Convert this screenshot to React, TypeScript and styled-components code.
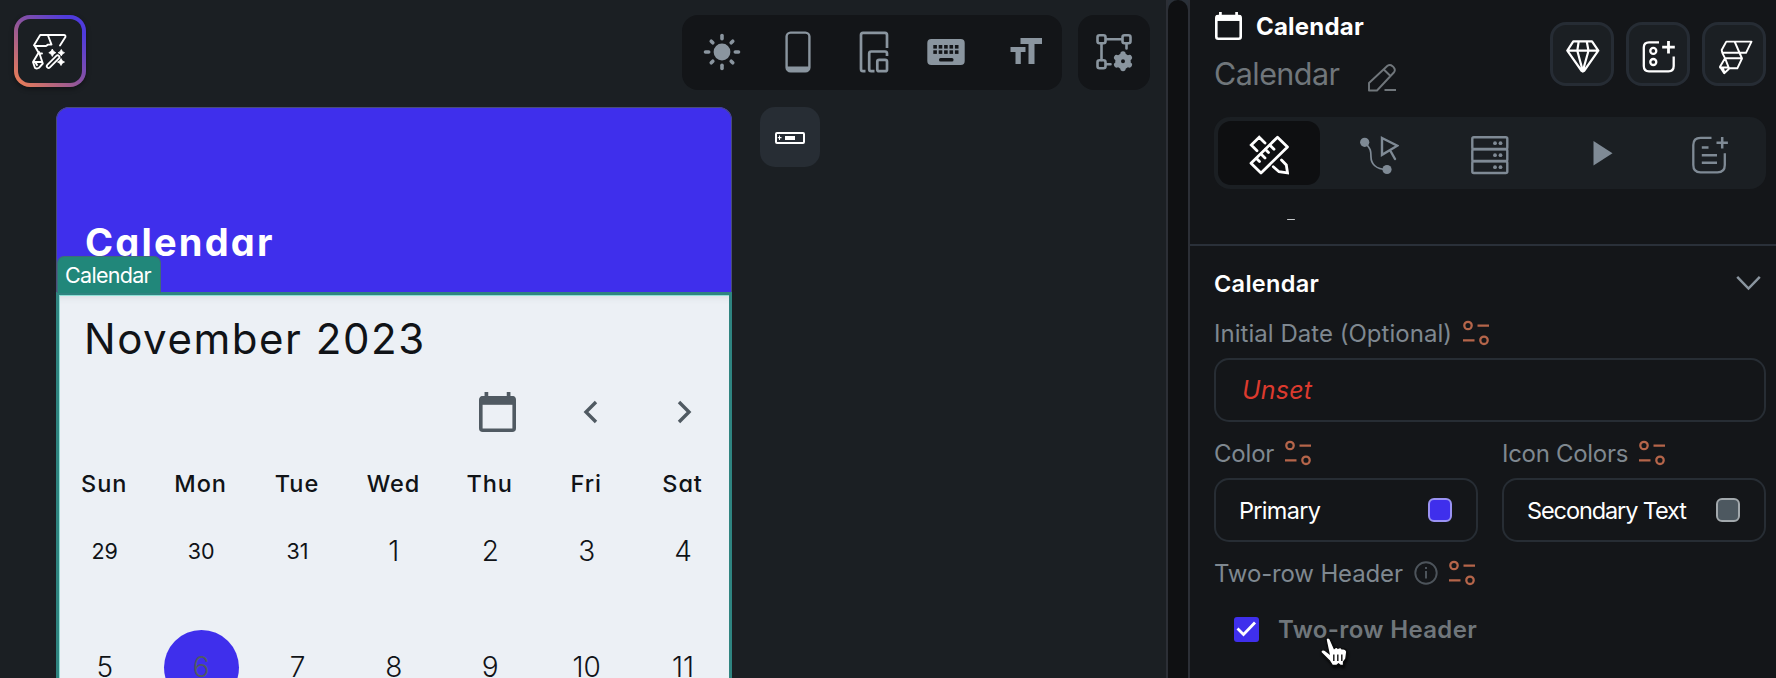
import React from "react";
import styled, { createGlobalStyle } from "styled-components";

const c = {
  canvas: "#1b1f23",
  panel: "#141619",
  bar: "#131518",
  raised: "#1b1f23",
  line: "#272d34",
  muted: "#8a959f",
  label: "#7f8890",
  dim: "#70767b",
  primary: "#3f2fec",
  teal: "#21877a",
  orange: "#b5654a",
  ink: "#101317",
  slate: "#505a62",
};

const GlobalStyle = createGlobalStyle`
  * { box-sizing: border-box; }
  body {
    margin: 0;
    background: ${c.canvas};
    font-family: Inter, "Liberation Sans", sans-serif;
    overflow: hidden;
  }
  svg { display: block; flex: none; }
`;

const Shell = styled.div`
  display: flex;
  width: 1776px;
  height: 678px;
  overflow: hidden;
`;

const Canvas = styled.main`
  width: 1166px;
  flex: none;
  background: ${c.canvas};
`;

const TopBar = styled.header`
  display: flex;
  align-items: flex-start;
  height: 107px;
  padding: 15px 16px 0 14px;
`;

const AiButton = styled.button`
  display: grid;
  place-items: center;
  width: 72px;
  height: 72px;
  padding: 0;
  border: 4px solid transparent;
  border-radius: 16px;
  background:
    linear-gradient(${c.canvas}, ${c.canvas}) padding-box,
    linear-gradient(to top right, #e27a5c 8%, #8a52a0 50%, #4f3bdc 85%) border-box;
  box-shadow: 0 2px 5px rgba(0, 0, 0, 0.4);
  margin-right: auto;
`;

const ToolGroup = styled.div<{ $width: number }>`
  display: flex;
  align-items: center;
  width: ${(p) => p.$width}px;
  height: 75px;
  padding-left: 2px;
  border-radius: 16px;
  background: ${c.bar};
  color: ${c.muted};
  & + & {
    margin-left: 16px;
    padding: 0;
  }
`;

const Tool = styled.div<{ $wide?: boolean }>`
  display: grid;
  place-items: center;
  flex: none;
  width: ${(p) => (p.$wide ? 76 : 72)}px;
  padding-bottom: 1px;
`;

const Stage = styled.div`
  display: flex;
  align-items: flex-start;
  padding-left: 56px;
  gap: 28px;
`;

const Phone = styled.section`
  width: 676px;
  height: 571px;
  border-radius: 13px 13px 0 0;
  overflow: hidden;
  background: linear-gradient(${c.primary} 0 185px, #ecf0f5 185px);
`;

const PhoneBar = styled.div`
  display: flex;
  align-items: flex-end;
  height: 185px;
  padding: 0 0 27px 28px;
  border: 1px solid #4a4c78;
  border-bottom: 0;
  border-radius: 13px 13px 0 0;
  background: ${c.primary};
  color: #fff;
  font-size: 38px;
  line-height: 46px;
  font-weight: 700;
  letter-spacing: 2.2px;
  font-feature-settings: "cv11";
`;

const CalendarBlock = styled.div`
  position: relative;
  height: 440px;
  color: ${c.ink};
  font-feature-settings: "cv11";
  box-shadow: inset 0 10px 8px -6px rgba(60, 70, 80, 0.14);
`;

const Outline = styled.div`
  position: absolute;
  inset: 0;
  border: 3px solid #2f8480;
  box-shadow: inset 1px 1px 0 #8fe0d6;
  pointer-events: none;
`;

const Tag = styled.div`
  position: absolute;
  left: 1px;
  top: -36px;
  width: 104px;
  height: 37px;
  padding-left: 7px;
  border: 1px solid #3f6b78;
  border-bottom: 0;
  border-radius: 7px 7px 0 0;
  background: ${c.teal};
  color: #fff;
  font-size: 21.5px;
  line-height: 37px;
  letter-spacing: -0.7px;
  font-feature-settings: normal;
`;

const Month = styled.div`
  height: 94px;
  padding-left: 28px;
  font-size: 42px;
  line-height: 94px;
  font-weight: 400;
  letter-spacing: 1.55px;
`;

const MonthNav = styled.div`
  display: flex;
  justify-content: flex-end;
  align-items: center;
  height: 52px;
  padding: 0 27px 1px 0;
  gap: 54.7px;
  color: ${c.slate};
`;

const Week = styled.div<{ $head?: boolean }>`
  display: grid;
  grid-template-columns: repeat(7, 96.4px);
  place-items: center;
  height: ${(p) => (p.$head ? 56 : 116)}px;
  padding: ${(p) => (p.$head ? "35px 0 0" : "0 0 2px 0.5px")};
`;

const DayName = styled.span`
  font-size: 23.5px;
  line-height: 21px;
  font-weight: 500;
  letter-spacing: 0.9px;
`;

const Day = styled.span<{ $outside?: boolean; $today?: boolean }>`
  display: grid;
  place-items: center;
  width: 75px;
  height: 75px;
  border-radius: 50%;
  font-size: ${(p) => (p.$outside ? 21.5 : 28)}px;
  font-weight: ${(p) => (p.$outside ? 400 : 350)};
  background: ${(p) => (p.$today ? c.primary : "transparent")};
  color: ${(p) => (p.$today ? c.slate : "inherit")};
`;

const AppBarToggle = styled.button`
  display: grid;
  place-items: center;
  width: 60px;
  height: 60px;
  padding: 2px 0 0;
  border: 0;
  border-radius: 15px;
  background: #272d34;
`;

const Gutter = styled.div`
  width: 24px;
  flex: none;
  border: solid #2c2f36;
  border-width: 0 2px;
  background: #2a3038;
`;

const GutterTrack = styled.div`
  height: 100%;
  border-radius: 10px 10px 0 0;
  background: #0f1012;
`;

const Panel = styled.aside`
  flex: 1;
  background: ${c.panel};
`;

const PanelHead = styled.div`
  display: flex;
  justify-content: space-between;
  height: 117px;
  padding: 0 10px 0 24px;
`;

const TitleRow = styled.div`
  display: flex;
  align-items: center;
  height: 52px;
  gap: 14px;
  padding-left: 1px;
  color: #fff;
  font-size: 24px;
  font-weight: 700;
  letter-spacing: 0.2px;
`;

const NameRow = styled.div`
  display: flex;
  align-items: center;
  height: 42px;
  gap: 28px;
  color: ${c.dim};
  font-size: 30.5px;
  letter-spacing: -0.55px;
`;

const PencilSlot = styled.span`
  padding-top: 9px;
`;

const Actions = styled.div`
  display: flex;
  gap: 12px;
  padding-top: 22px;
`;

const ActionButton = styled.button`
  display: grid;
  place-items: center;
  width: 64px;
  height: 64px;
  padding: 0;
  border: 3px solid #262c34;
  border-radius: 16px;
  background: ${c.raised};
  color: #fff;
`;

const Tabs = styled.nav`
  display: grid;
  grid-template-columns: 102px 118px 104px 120px 1fr;
  height: 72px;
  margin: 0 10px 0 24px;
  padding: 4px;
  border-radius: 16px;
  background: ${c.raised};
`;

const Tab = styled.div<{ $active?: boolean }>`
  display: grid;
  place-items: center;
  padding-top: 4px;
  border-radius: 13px;
  background: ${(p) => (p.$active ? "#0e0f11" : "transparent")};
  color: ${(p) => (p.$active ? "#fff" : "#7f8a95")};
`;

const Scrolled = styled.div`
  height: 57px;
  padding: 29.5px 0 0 97px;
  border-bottom: 2px solid #2a3039;
`;

const ScrolledDash = styled.div`
  width: 8px;
  height: 1.5px;
  border-radius: 1px;
  background: #c5c8ca;
`;

const Section = styled.section`
  padding: 0 10px 0 24px;
`;

const SectionTitle = styled.div`
  display: flex;
  align-items: center;
  justify-content: space-between;
  height: 74px;
  padding-right: 5px;
  color: #fff;
  font-size: 23.5px;
  font-weight: 600;
  letter-spacing: 0.3px;
`;

const Label = styled.div<{ $track?: number }>`
  display: flex;
  align-items: center;
  gap: 11px;
  height: 26px;
  margin-bottom: 12px;
  color: ${c.label};
  font-size: 24px;
  letter-spacing: ${(p) => p.$track ?? 0}px;
  white-space: nowrap;
`;

const Field = styled.div<{ $track?: number }>`
  display: flex;
  align-items: center;
  justify-content: space-between;
  height: 64px;
  margin-bottom: 18px;
  padding: 0 24px 0 23px;
  border: 2px solid ${c.line};
  border-radius: 15px;
  color: #fff;
  font-size: 23.5px;
  letter-spacing: ${(p) => p.$track ?? 0}px;
  white-space: nowrap;
`;

const Unset = styled.em`
  padding-left: 3px;
  font-size: 25px;
  color: #dc3a2e;
`;

const Pair = styled.div`
  display: grid;
  grid-template-columns: 1fr 1fr;
  gap: 24px;
`;

const Swatch = styled.span<{ $fill: string; $edge: string }>`
  width: 24px;
  height: 24px;
  border-radius: 6px;
  border: 2px solid ${(p) => p.$edge};
  background: ${(p) => p.$fill};
`;

const CheckRow = styled.div`
  position: relative;
  display: flex;
  align-items: center;
  height: 50px;
  margin-top: 18px;
  padding-left: 20px;
  gap: 19px;
  color: ${c.dim};
  font-size: 24px;
  font-weight: 600;
  letter-spacing: 0.35px;
`;

const CheckBox = styled.span`
  display: grid;
  place-items: center;
  width: 25px;
  height: 25px;
  border-radius: 3px;
  background: ${c.primary};
`;

const Pointer = styled.div`
  position: absolute;
  left: 104px;
  top: 30px;
  filter: drop-shadow(1px 2px 1px rgba(0, 0, 0, 0.7));
`;

const line = (w: number) => ({
  fill: "none",
  stroke: "currentColor",
  strokeWidth: w,
  strokeLinecap: "round" as const,
  strokeLinejoin: "round" as const,
});

const AiIcon = () => (
  <svg width="38" height="38" viewBox="0 0 38 38" color="#fff">
    <g {...line(1.9)}>
      <path d="M29 13.5 34.4 5Q34.8 3 33 3H9.2L3 13.2 4 14H15L17 12.6H20.5L17 3.5" />
      <path d="M4 14.2 8 21.5H11M8 20 2 30 4 36Q6 37 8 35.8L11.8 31.5 8 20M3 30H11M4.5 30.5 6 33" />
    </g>
    <path d="M17.6 34.2 26.6 25.2" {...line(5.4)} />
    <path d="M17.6 34.2 26.6 25.2" {...line(1.8)} stroke={c.canvas} />
    <path
      d="M21.3 17q.8 2.9 3.5 3.7-2.7.8-3.5 3.7-.8-2.9-3.5-3.7 2.7-.8 3.5-3.7zM30.3 17.5q.7 2.5 3.2 3.2-2.5.7-3.2 3.2-.7-2.5-3.2-3.2 2.5-.7 3.2-3.2zM30 26.5q.8 2.7 3.5 3.5-2.7.8-3.5 3.5-.8-2.7-3.5-3.5 2.7-.8 3.5-3.5z"
      fill="currentColor"
      stroke="currentColor"
      strokeWidth="0.8"
    />
  </svg>
);

const SunIcon = () => (
  <svg width="38" height="38" viewBox="-19 -19 38 38">
    <circle r="8.4" fill="currentColor" />
    {[0, 45, 90, 135, 180, 225, 270, 315].map((a) => (
      <path key={a} d={a % 90 ? "M0 -13V-15.2" : "M0 -13.3V-16.5"} transform={`rotate(${a})`} {...line(3.6)} />
    ))}
  </svg>
);

const PhoneIcon = () => (
  <svg width="26" height="42" viewBox="0 0 26 42">
    <rect x="1.6" y="1.6" width="22.8" height="38.8" rx="4" {...line(2.4)} />
    <path d="M2 35.5H24V38Q23 40.5 20 40.5H6Q3 40.5 2 38Z" fill="currentColor" />
  </svg>
);

const DevicesIcon = () => (
  <svg width="30" height="42" viewBox="0 0 30 42">
    <g {...line(2.7)} strokeLinecap="butt">
      <path d="M6.5 40.2H4Q2 40.2 2 38V4Q2 1.8 4 1.8H26Q28 1.8 28 4V17" />
      <path d="M15.5 40.2H12.2Q10.2 40.2 10.2 38V22.5Q10.2 20.5 12.2 20.5H26Q28 20.5 28 22.5V25" />
      <rect x="18.3" y="28.8" width="9.7" height="11.4" rx="1.8" />
    </g>
  </svg>
);

const KeyboardIcon = () => (
  <svg width="46" height="28" viewBox="0 0 46 28">
    <rect x="0.3" y="1" width="37.4" height="26" rx="4" fill="currentColor" />
    <g fill={c.bar}>
      {[0, 1, 2, 3, 4].map((i) => (
        <React.Fragment key={i}>
          <rect x={6.3 + i * 5.4} y="7" width="3.6" height="3.6" />
          <rect x={6.3 + i * 5.4} y="12.3" width="3.6" height="3.6" />
        </React.Fragment>
      ))}
      <rect x="12" y="20" width="14.5" height="3.4" rx="1.5" />
    </g>
  </svg>
);

const TextSizeIcon = () => (
  <svg width="32" height="30" viewBox="0 0 32 30">
    <path d="M10.5 1H32V7H24.5V27H18.5V7H10.5ZM0.5 10H15.5V15H10.8V27H5.5V15H0.5Z" fill="currentColor" />
  </svg>
);

const NodesIcon = () => (
  <svg width="40" height="40" viewBox="0 0 40 40">
    <g {...line(2.6)}>
      <rect x="3.5" y="3.2" width="8" height="8" rx="2" />
      <rect x="28.5" y="3.2" width="8" height="8" rx="2" />
      <rect x="3.5" y="28.3" width="8" height="8" rx="2" />
      <path d="M12 7.2H28M7.5 11.5V28M32.5 11.5V16.5M12 32.3H16.5" />
    </g>
    <circle cx="29" cy="29.3" r="4.9" fill="none" stroke="currentColor" strokeWidth="5.8" />
    {[0, 60, 120, 180, 240, 300].map((a) => (
      <circle key={a} cx="29" cy="22" r="2.7" fill="currentColor" transform={`rotate(${a} 29 29.3)`} />
    ))}
  </svg>
);

const AppBarIcon = () => (
  <svg width="30" height="12" viewBox="0 0 30 12" color="#fff">
    <rect x="1" y="1" width="28" height="10" rx="1" {...line(2)} />
    <path d="M10 4H20V8H10ZM4 3.5H5V5H6.5V6.3H5V8H4V6.3H2.8V5H4Z" fill="currentColor" />
  </svg>
);

const CalendarIcon = ({ w, h, s }: { w: number; h: number; s: number }) => (
  <svg width={w} height={h} viewBox={`0 0 ${w} ${h}`}>
    <rect x={s / 2} y={h * 0.1 + s / 2} width={w - s} height={h * 0.9 - s} rx="2" fill="none" stroke="currentColor" strokeWidth={s} />
    <rect x={s / 2} y={h * 0.11} width={w - s} height={h * 0.21} fill="currentColor" />
    <rect x={w * 0.15} y="0" width={w * 0.1} height={h * 0.14} fill="currentColor" />
    <rect x={w * 0.75} y="0" width={w * 0.1} height={h * 0.14} fill="currentColor" />
  </svg>
);

const NavChevron = ({ flip }: { flip?: boolean }) => (
  <svg width="40" height="24" viewBox="0 0 40 24" transform={flip ? "scale(-1 1)" : undefined}>
    <path d="M26 2 16 12 26 22" fill="none" stroke="currentColor" strokeWidth="3.4" />
  </svg>
);

const PencilIcon = () => (
  <svg width="30" height="30" viewBox="0 0 30 30">
    <path d="M2 27.5V20L20.5 2.8Q23 1 25.5 3.2L26.5 4.2Q29 7 26.8 9.5L10 27.5ZM16.8 6.5 23.5 13M17.5 27H29" {...line(1.9)} strokeLinecap="butt" />
  </svg>
);

const DiamondIcon = () => (
  <svg width="38" height="38" viewBox="0 0 38 38">
    <path d="M10.3 6.3H29L35.3 15.7 21 36Q19.8 37 18.7 36L4.3 15.7ZM4.3 15.7H35.3M15.7 6.3 14.3 15.7 19.8 36M23.7 6.3 25.5 15.7 19.8 36" {...line(2.2)} />
  </svg>
);

const WidgetPlusIcon = () => (
  <svg width="38" height="38" viewBox="0 0 38 38">
    <g {...line(2.3)} strokeLinecap="butt">
      <path d="M20 7.3H10Q4.8 7.3 4.8 12.5V31Q4.8 36.3 10 36.3H29.5Q34.7 36.3 34.7 31V21.5" />
      <circle cx="14.3" cy="15.9" r="3" />
      <circle cx="14.3" cy="27" r="3" />
      <path d="M29.5 6V18.5M23.2 12.2H35.8" strokeWidth="2.8" />
    </g>
  </svg>
);

const FlowIcon = () => (
  <svg width="38" height="38" viewBox="0 0 38 38" overflow="visible">
    <path d="M11.3 6.6H36.5L31 17.8H7.3L6.7 15ZM19.8 7 27 23.5 22.3 33.3H14L10 23.2H27M7.3 17.8 10 23.2 5 31.8 9.2 38.2 13.8 34M5 32.5H13.5M7.8 33 9 36" {...line(1.9)} />
  </svg>
);

const DesignIcon = () => (
  <svg width="40" height="40" viewBox="0 0 40 40">
    <g {...line(2.8)} strokeLinejoin="miter">
      <path d="M28.5 2.2 38.5 11.9 12 38 2 28.3Z" strokeLinejoin="round" />
      <path d="M7.5 23.5 10.5 26.5M12 19 16 23M16.5 14.6 19.5 17.6M21 10.3 25 14.3M16 8 10.2 2.3 2.3 10 8 15.7" />
      <path d="M24.3 31.7 30 36.7 38.5 37.8 37.3 30 32.5 25" />
    </g>
  </svg>
);

const ActionsIcon = () => (
  <svg width="40" height="40" viewBox="0 0 40 40">
    <circle cx="5.7" cy="7.3" r="4.6" fill="currentColor" />
    <circle cx="28" cy="34.5" r="4.6" fill="currentColor" />
    <path d="M5.7 7.3C12 14 12 16 12 22S16 34.5 28 34.5" {...line(1.7)} />
    <path d="M23 3 38.3 10.7 23 19.8ZM31.5 16 36 24" {...line(2.4)} strokeLinejoin="miter" />
  </svg>
);

const ServerIcon = () => (
  <svg width="40" height="40" viewBox="0 0 40 40">
    {[2.2, 14.2, 26.2].map((y) => (
      <React.Fragment key={y}>
        <rect x="2.3" y={y} width="35" height="11.8" rx="1.5" {...line(2.4)} />
        <circle cx="25" cy={y + 6} r="1.9" fill="currentColor" />
        <circle cx="30.5" cy={y + 6} r="1.9" fill="currentColor" />
      </React.Fragment>
    ))}
  </svg>
);

const PlayIcon = () => (
  <svg width="20" height="28" viewBox="-1 0 20 28" overflow="visible">
    <path d="M.5 0V24.5L19.5 12.2Z" fill="currentColor" />
  </svg>
);

const NotesIcon = () => (
  <svg width="44" height="40" viewBox="-0.5 0 44 40">
    <g {...line(2.3)} strokeLinecap="butt">
      <path d="M21 2.8H10Q2.8 2.8 2.8 10V30Q2.8 37.3 10 37.3H27Q34.3 37.3 34.3 30V18.2" />
      <path d="M11.3 12.5H18M11.3 20.3H26.5M11.3 27.8H26.5M31.7 2V13.5M26 7.7H37.4" strokeWidth="2.5" />
    </g>
  </svg>
);

const ChevronDown = () => (
  <svg width="25" height="16" viewBox="0 0 25 16">
    <path d="M1.2 1.8 12.5 13.5 23.8 1.8" fill="none" stroke={c.muted} strokeWidth="2.5" />
  </svg>
);

const VariableIcon = () => (
  <svg width="26" height="26" viewBox="0 0 26 26" color={c.orange}>
    <g {...line(2.3)} strokeLinecap="butt">
      <circle cx="5" cy="5.5" r="3.7" />
      <circle cx="21" cy="20.3" r="3.7" />
      <path d="M14.5 5.7H26M0 20.3H11.5" />
    </g>
  </svg>
);

const InfoIcon = () => (
  <svg width="24" height="24" viewBox="0 0 24 24" color="#4d545b">
    <circle cx="12" cy="12" r="10.7" {...line(1.9)} />
    <path d="M12 10V17.5M12 6V8" {...line(2)} strokeLinecap="butt" />
  </svg>
);

const HandIcon = () => (
  <svg width="32" height="34" viewBox="0 0 32 34">
    <path
      d="M8 5.5Q9.5 2.5 12 5L16.2 14.5Q18.5 12.5 20 14.3 22.5 12.6 24 14.9 27.5 14 28.8 17.5L27.8 25 25.5 28V31.5H22.5L20.5 29.8 18.5 31.5H14.5L11.5 27 3 18.5Q2.6 15.2 6.5 16L11 19.5Z"
      fill="#fff"
      stroke="#0b0c0d"
      strokeWidth="1.3"
    />
    <path d="M15.8 20.5V27M19.8 20.5V27M23.8 20.5V27" stroke="#222" strokeWidth="1.5" />
  </svg>
);

const dayNames = ["Sun", "Mon", "Tue", "Wed", "Thu", "Fri", "Sat"];
const weeks = [
  [29, 30, 31, 1, 2, 3, 4],
  [5, 6, 7, 8, 9, 10, 11],
];

export default function App() {
  return (
    <Shell>
      <GlobalStyle />
      <Canvas>
        <TopBar>
          <AiButton><AiIcon /></AiButton>
          <ToolGroup $width={380}>
            <Tool $wide><SunIcon /></Tool>
            <Tool $wide><PhoneIcon /></Tool>
            <Tool $wide><DevicesIcon /></Tool>
            <Tool $wide><KeyboardIcon /></Tool>
            <Tool $wide><TextSizeIcon /></Tool>
          </ToolGroup>
          <ToolGroup $width={72}>
            <Tool><NodesIcon /></Tool>
          </ToolGroup>
        </TopBar>
        <Stage>
          <Phone>
            <PhoneBar>Calendar</PhoneBar>
            <CalendarBlock>
              <Month>November 2023</Month>
              <MonthNav>
                <CalendarIcon w={37} h={40} s={3.6} />
                <NavChevron />
                <NavChevron flip />
              </MonthNav>
              <Week $head>
                {dayNames.map((d) => <DayName key={d}>{d}</DayName>)}
              </Week>
              {weeks.map((week, i) => (
                <Week key={i}>
                  {week.map((d) => (
                    <Day key={d} $outside={i === 0 && d > 20} $today={d === 6}>{d}</Day>
                  ))}
                </Week>
              ))}
              <Outline />
              <Tag>Calendar</Tag>
            </CalendarBlock>
          </Phone>
          <AppBarToggle><AppBarIcon /></AppBarToggle>
        </Stage>
      </Canvas>
      <Gutter><GutterTrack /></Gutter>
      <Panel>
        <PanelHead>
          <div>
            <TitleRow>
              <CalendarIcon w={27} h={28} s={2.6} />
              Calendar
            </TitleRow>
            <NameRow>
              Calendar
              <PencilSlot><PencilIcon /></PencilSlot>
            </NameRow>
          </div>
          <Actions>
            <ActionButton><DiamondIcon /></ActionButton>
            <ActionButton><WidgetPlusIcon /></ActionButton>
            <ActionButton><FlowIcon /></ActionButton>
          </Actions>
        </PanelHead>
        <Tabs>
          <Tab $active><DesignIcon /></Tab>
          <Tab><ActionsIcon /></Tab>
          <Tab><ServerIcon /></Tab>
          <Tab><PlayIcon /></Tab>
          <Tab><NotesIcon /></Tab>
        </Tabs>
        <Scrolled><ScrolledDash /></Scrolled>
        <Section>
          <SectionTitle>
            Calendar
            <ChevronDown />
          </SectionTitle>
          <Label $track={0.03}>
            Initial Date (Optional)
            <VariableIcon />
          </Label>
          <Field $track={0.2}><Unset>Unset</Unset></Field>
          <Pair>
            <div>
              <Label $track={-0.2}>Color<VariableIcon /></Label>
              <Field $track={-0.7}>
                Primary
                <Swatch $fill={c.primary} $edge="#9a92f3" />
              </Field>
            </div>
            <div>
              <Label $track={-0.3}>Icon Colors<VariableIcon /></Label>
              <Field $track={-1.1}>
                Secondary Text
                <Swatch $fill="#4d5860" $edge="#a2a8ac" />
              </Field>
            </div>
          </Pair>
          <Label $track={-0.15}>
            Two-row Header
            <InfoIcon />
            <VariableIcon />
          </Label>
          <CheckRow>
            <CheckBox>
              <svg width="21" height="18" viewBox="0 0 21 18">
                <path d="M1.5 8.5 7.5 14.5 19 2.5" fill="none" stroke="#fff" strokeWidth="2.8" />
              </svg>
            </CheckBox>
            Two-row Header
            <Pointer><HandIcon /></Pointer>
          </CheckRow>
        </Section>
      </Panel>
    </Shell>
  );
}
